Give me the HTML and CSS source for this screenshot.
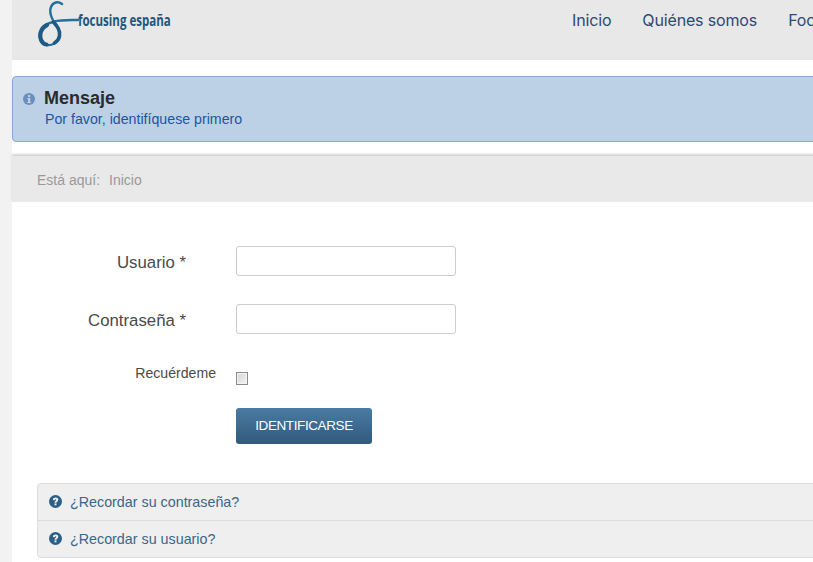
FILE: index.html
```html
<!DOCTYPE html>
<html lang="es">
<head>
    <meta charset="UTF-8">
    <meta name="viewport" content="width=device-width, initial-scale=1.0">
    <title>Focusing España - Identificarse</title>
    <link rel="stylesheet" href="styles.css">
</head>
<body>
    <div class="page">
        <header class="site-header">
            <a href="#" class="logo">
                <svg class="logo-mark" width="42" height="48" viewBox="0 0 42 48">
                    <path d="M25 4 C21 1 16 2 14 7 C12 12 14 17 17 22 C20 27 23.500 30 22.500 36 C21.500 42 15 46 9.500 45 C4 44 2 38 3 33 C5 26 11 23 17 21.500 C25 19.500 33 20 41 20" fill="none" stroke="#23709e" stroke-width="2.4" stroke-linecap="round"/>
                    <path d="M9.500 44.500 C4.500 44 2.500 38 3.500 33 C4.500 29 7 26.500 10 25" fill="none" stroke="#1d5a85" stroke-width="4.200" stroke-linecap="round"/>
                    <path d="M16.500 22 C20 26 23.500 30 22.500 36 C22 39 20 41.500 17.500 43" fill="none" stroke="#1d5a85" stroke-width="3.600" stroke-linecap="round"/>
                </svg>
                <span class="logo-text">focusing españa</span>
            </a>
            <nav class="main-nav">
                <a href="#">Inicio</a>
                <a href="#">Quiénes somos</a>
                <a href="#">Focusing</a>
            </nav>
        </header>

        <div class="alert">
            <svg class="alert-icon" width="12" height="12" viewBox="0 0 12 12">
                <circle cx="6" cy="6" r="6" fill="#6b8fbd"/>
                <rect x="5" y="2" width="2.2" height="2" fill="#bdd1e6"/>
                <path d="M4.3 5h2.9v4h.8v1H4.2V9H5V6h-.7z" fill="#bdd1e6"/>
            </svg>
            <div class="alert-body">
                <h4>Mensaje</h4>
                <p>Por favor, identifíquese primero</p>
            </div>
        </div>

        <div class="breadcrumb">
            <span>Está aquí:</span>
            <span>Inicio</span>
        </div>

        <main class="content">
            <form class="login-form">
                <div class="form-group">
                    <label for="username" class="form-label">Usuario *</label>
                    <input type="text" id="username" class="form-input">
                </div>
                <div class="form-group">
                    <label for="password" class="form-label">Contraseña *</label>
                    <input type="password" id="password" class="form-input">
                </div>
                <div class="form-group form-remember">
                    <label for="remember" class="form-label-small">Recuérdeme</label>
                    <input type="checkbox" id="remember" class="form-check">
                </div>
                <div class="form-actions">
                    <button type="submit" class="btn">IDENTIFICARSE</button>
                </div>
            </form>

            <ul class="help-links">
                <li>
                    <svg width="13" height="13" viewBox="0 0 12 12">
                        <circle cx="6" cy="6" r="6" fill="#2a5f88"/>
                        <path d="M3.600 4.500C3.700 3.100 4.800 2.400 6.100 2.400c1.400 0 2.500.8 2.500 2 0 1.600-1.700 1.700-1.700 2.700H5.100c0-1.700 1.600-1.900 1.600-2.600 0-.7-1.200-.8-1.400.4z" fill="#efefef"/>
                        <rect x="5.100" y="7.800" width="1.800" height="1.700" fill="#efefef"/>
                    </svg>
                    <a href="#">¿Recordar su contraseña?</a>
                </li>
                <li>
                    <svg width="13" height="13" viewBox="0 0 12 12">
                        <circle cx="6" cy="6" r="6" fill="#2a5f88"/>
                        <path d="M3.600 4.500C3.700 3.100 4.800 2.400 6.100 2.400c1.400 0 2.500.8 2.500 2 0 1.600-1.700 1.700-1.700 2.700H5.100c0-1.700 1.600-1.900 1.600-2.600 0-.7-1.200-.8-1.400.4z" fill="#efefef"/>
                        <rect x="5.100" y="7.800" width="1.800" height="1.700" fill="#efefef"/>
                    </svg>
                    <a href="#">¿Recordar su usuario?</a>
                </li>
            </ul>
        </main>
    </div>
</body>
</html>
```

FILE: styles.css
```css
* {
    box-sizing: border-box;
    margin: 0;
    padding: 0;
}

html, body {
    height: 100%;
    overflow: hidden;
}

body {
    background-color: #f2f2f2;
    color: #333;
    font-family: 'Liberation Sans', Arial, sans-serif;
    font-size: 14px;
    padding-left: 12px;
}

.page {
    background-color: #fff;
    width: 1000px;
    height: 100%;
}

/* cabecera */
.site-header {
    background-color: #e8e8e8;
    height: 60px;
    display: flex;
    align-items: flex-start;
}

.logo {
    display: flex;
    align-items: flex-start;
    width: 134px;
    margin-left: 25px;
    text-decoration: none;
}

.logo-mark {
    flex: none;
}

.logo-text {
    color: #23567c;
    font-family: 'Open Sans', sans-serif;
    font-size: 16px;
    font-weight: 700;
    margin-top: 9px;
    margin-left: -1px;
    white-space: nowrap;
    transform: scaleX(0.72);
    transform-origin: left center;
}

.main-nav {
    display: flex;
    gap: 31px;
    margin-left: 401px;
    padding-top: 10px;
}

.main-nav a {
    color: #2c4a72;
    font-family: 'Inter', sans-serif;
    font-size: 16px;
    letter-spacing: -0.15px;
    line-height: 20px;
    text-decoration: none;
}

/* mensaje */
.alert {
    background-color: #bdd1e6;
    border: 1px solid #8aa6d4;
    border-radius: 4px;
    margin-top: 16px;
    height: 66px;
    display: flex;
    padding: 10px 10px 0;
}

.alert-icon {
    flex: none;
    margin-top: 6px;
}

.alert-body {
    margin-left: 10px;
}

.alert h4 {
    color: #2b2b2b;
    font-size: 18px;
    line-height: 22px;
    margin-left: -1px;
}

.alert p {
    color: #1d54a0;
    font-size: 14.2px;
    line-height: 20px;
}

/* ruta */
.breadcrumb {
    background-color: #e9e9e9;
    box-shadow: 0 -2px 2px #d4d4d4;
    margin-top: 14px;
    height: 46px;
    display: flex;
    align-items: center;
    gap: 9px;
    padding: 2px 0 0 25px;
    color: #999;
    font-size: 14px;
}

/* formulario */
.content {
    padding: 44px 0 0 25px;
}

.form-group {
    display: flex;
    align-items: flex-start;
    margin-bottom: 28px;
}

.form-label {
    width: 149px;
    height: 30px;
    text-align: right;
    color: #4a4a4a;
    font-size: 16.8px;
    line-height: 34px;
    margin-right: 50px;
}

.form-input {
    width: 220px;
    height: 30px;
    background-color: #fff;
    border: 1px solid #ccc;
    border-radius: 3px;
}

.form-remember {
    padding-top: 1px;
    margin-bottom: 23px;
}

.form-label-small {
    width: 179px;
    text-align: right;
    color: #4a4a4a;
    font-size: 14.1px;
    line-height: 20px;
    margin-right: 20px;
}

.form-check {
    appearance: none;
    width: 12px;
    height: 13px;
    margin-top: 9px;
    background: linear-gradient(135deg, #d4d4d4, #f4f4f4);
    border: 1px solid #8a8a8a;
    box-shadow: inset 0 0 0 1px #f4f4f4;
}

.form-actions {
    padding-left: 199px;
}

.btn {
    width: 136px;
    height: 36px;
    background: linear-gradient(#4a7ba3, #315a7d);
    color: #fff;
    border: none;
    border-radius: 3px;
    font-family: 'Liberation Sans', Arial, sans-serif;
    font-size: 13.5px;
    letter-spacing: -0.4px;
    padding-bottom: 2px;
}

.help-links {
    list-style: none;
    margin-top: 39px;
    background-color: #efefef;
    border: 1px solid #ddd;
    border-radius: 4px;
}

.help-links li {
    height: 36px;
    display: flex;
    align-items: center;
    gap: 8px;
    padding: 0 0 1px 11px;
}

.help-links li + li {
    height: 37px;
    border-top: 1px solid #ddd;
}

.help-links a {
    color: #3b6689;
    font-size: 14.3px;
    text-decoration: none;
}
```
